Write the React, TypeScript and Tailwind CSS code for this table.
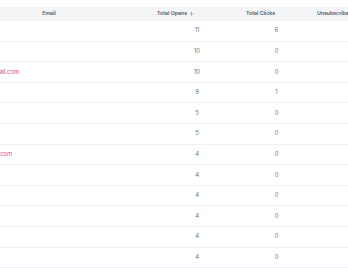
import { ArrowDown } from "lucide-react"

type Row = { email: string; tail: string; link: boolean; opens: number; clicks: number }

const rows: Row[] = [
  { email: "mark.hendricks@outlook.com", tail: "pr-[157px]", link: false, opens: 11, clicks: 6 },
  { email: "s.patterson@yahoo.com", tail: "pr-[157px]", link: false, opens: 10, clicks: 0 },
  { email: "laura.bennett@gmail.com", tail: "pr-[138px]", link: true, opens: 10, clicks: 0 },
  { email: "d.okafor@hotmail.com", tail: "pr-[157px]", link: false, opens: 9, clicks: 1 },
  { email: "kim.tran@icloud.com", tail: "pr-[157px]", link: false, opens: 5, clicks: 0 },
  { email: "jrodriguez@proton.me", tail: "pr-[157px]", link: false, opens: 5, clicks: 0 },
  { email: "hello@brightside.com", tail: "pr-[145px]", link: true, opens: 4, clicks: 0 },
  { email: "alex.m@fastmail.com", tail: "pr-[157px]", link: false, opens: 4, clicks: 0 },
  { email: "nina.w@live.com", tail: "pr-[157px]", link: false, opens: 4, clicks: 0 },
  { email: "p.singh@gmail.com", tail: "pr-[157px]", link: false, opens: 4, clicks: 0 },
  { email: "t.becker@web.de", tail: "pr-[157px]", link: false, opens: 4, clicks: 0 },
  { email: "c.lopez@aol.com", tail: "pr-[157px]", link: false, opens: 4, clicks: 0 },
]

export default function App() {
  return (
    <div className="w-[348px] h-[268px] overflow-hidden bg-white font-['Inter',sans-serif]">
      <div className="ml-[-59px] w-[480px] pt-[7px]">
        {/* header */}
        <div className="grid grid-cols-[216px_89px_71px_104px] h-[14px] items-center bg-[#f4f5f7] text-[5.2px] font-semibold text-[#4b5563]">
          <div className="text-center">Email</div>
          <div className="flex items-center gap-[2px]">
            <span>Total Opens</span>
            <ArrowDown className="size-[5px] text-[#6b7280]" strokeWidth={2.5} />
          </div>
          <div>Total Clicks</div>
          <div className="whitespace-nowrap">Unsubscribed</div>
        </div>

        {rows.map((r, i) => (
          <div
            key={i}
            className="grid grid-cols-[216px_89px_71px_104px] h-[20.6px] items-center border-b border-[#eef0f3] text-[5.8px] text-[#6b7280]"
          >
            <div className={`flex justify-end min-w-0 ${r.tail}`}>
              <span className={`shrink-0 whitespace-nowrap ${r.link ? "text-[#e5478a]" : "text-[#9ca3af]"}`}>
                {r.email}
              </span>
            </div>
            <div className="text-center pr-[9px]">{r.opens}</div>
            <div className="text-center pr-[10px]">{r.clicks}</div>
            <div></div>
          </div>
        ))}
      </div>
    </div>
  )
}
